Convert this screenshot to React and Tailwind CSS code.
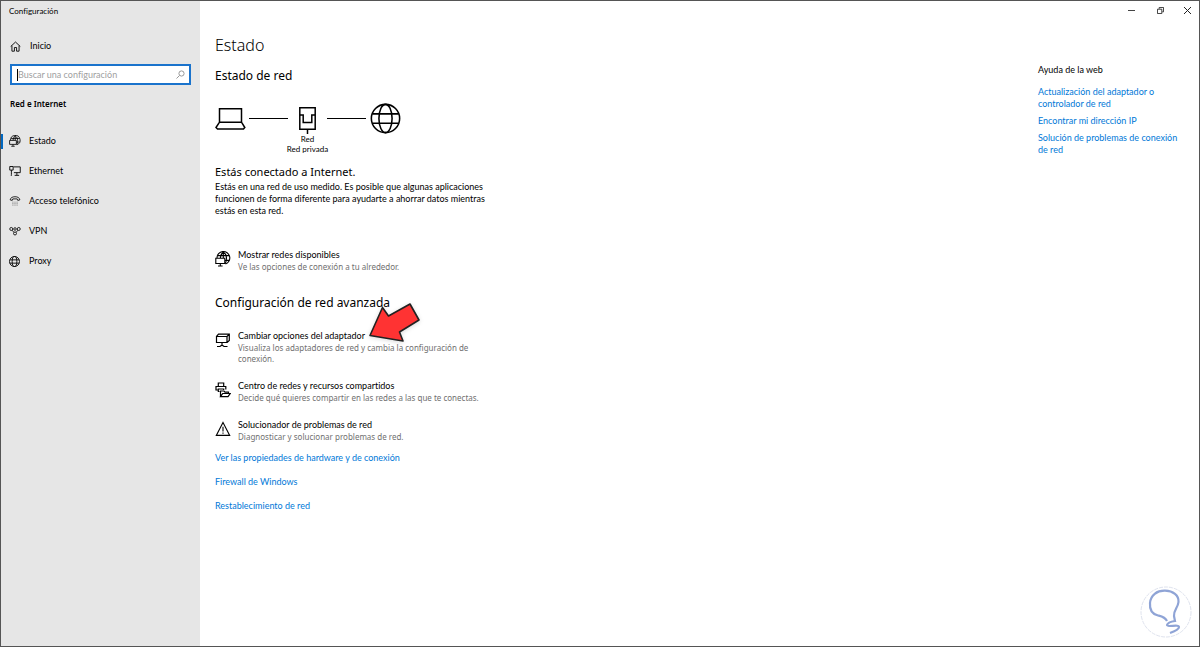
import React from 'react';

function Icon({ size = 12, box = 16, width = 1.1, children }) {
    return (
        <svg
            width={size}
            height={size}
            viewBox={`0 0 ${box} ${box}`}
            fill="none"
            stroke="currentColor"
            strokeWidth={width}
            className="block shrink-0"
            aria-hidden="true"
        >
            {children}
        </svg>
    );
}

const HomeIcon = () => (
    <Icon size={11} width={1.3}>
        <path d="M1 8 8 1.500 15 8M2.800 6.800v8h3.600V9.500h3.200v5.300h3.600v-8" />
    </Icon>
);

// Globe with a small monitor in front of its lower left part
const NetworkIcon = ({ size }) => (
    <Icon size={size}>
        <path d="M2 7A6.400 6.400 0 1 1 10.500 13" />
        <path d="M2.800 4.600h11.200M10 9.400h4.300M8.300 1C6.600 2.500 5.600 4.500 5.400 7M8.300 1c2.300 1.700 3.200 3.800 3.200 6.300s-.4 4-1.300 5.500M8.300 1v6" />
        <path d="M.8 7.200h9v5.300h-9zM5.300 12.500v2.300M3 15h4.600" />
    </Icon>
);

const EthernetIcon = () => (
    <Icon width={1.2}>
        <path d="M6 2.500h9v7.700H6.500M10.500 10.200v3.300M7.500 13.800h6M1 2h4.500v4.800H1zM3.200 6.800v3.700c0 1.800 0 3.300-.2 4" />
    </Icon>
);

const PhoneIcon = () => (
    <Icon>
        <path d="M1.500 6.500C2 3.500 4.700 2.300 8 2.300s6 1.200 6.500 4.200l-2.800.7-.8-2H5.100l-.8 2z" />
        <path d="M4.500 9.500h7M4.500 11.500h7M4.500 13.500h7" strokeDasharray="1.400 1.400" opacity=".5" />
    </Icon>
);

const VpnIcon = () => (
    <Icon>
        <circle cx="3" cy="5.300" r="2" />
        <circle cx="8" cy="5.300" r="1.700" />
        <circle cx="13" cy="5.300" r="2" />
        <circle cx="8" cy="11.300" r="2" />
        <path d="M4.300 7 6.500 9.800M11.700 7 9.500 9.800" />
    </Icon>
);

const GlobeIcon = ({ size = 11, width = 1.3 }) => (
    <Icon size={size} width={width}>
        <circle cx="8" cy="8" r="7.300" />
        <ellipse cx="8" cy="8" rx="3.400" ry="7.300" />
        <path d="M1.300 5.600h13.400M1.300 10.400h13.400" />
    </Icon>
);

const AdapterIcon = () => (
    <Icon size={16} width={1.2}>
        <path d="M1.500 4.500h10.500v6H1.500zM1.500 4.500l2-2.300h10.800v6.300L12 10.500M12 4.500l2.300-2.300M7 10.500v2.500M2 14.500h3L7 13l2 1.500h3.500" />
    </Icon>
);

const SharingIcon = () => (
    <Icon size={16} width={1.2}>
        <path d="M3.300 4.500V1h5.400v3.500M4.500 9.500H3.300V7h5.400v1M3.300 8H1V4.500h9.800v3" />
        <path d="M5.500 14.500V9H9l1 1.200h3.500v1.500M5.500 14.700l2.200-3.200h7.500L13 14.700z" />
    </Icon>
);

const WarningIcon = () => (
    <Icon size={16} width={1.1}>
        <path d="M8 1.500 14.700 14.400H1.300zM8 5.800v4.700M8 11.500v1.300" />
    </Icon>
);

const navItems = [
    { label: 'Estado', icon: NetworkIcon, active: true },
    { label: 'Ethernet', icon: EthernetIcon },
    { label: 'Acceso telefónico', icon: PhoneIcon },
    { label: 'VPN', icon: VpnIcon },
    { label: 'Proxy', icon: GlobeIcon },
];

const advancedOptions = [
    {
        title: 'Cambiar opciones del adaptador',
        text: 'Visualiza los adaptadores de red y cambia la configuración de conexión.',
        icon: AdapterIcon,
        pointed: true,
    },
    {
        title: 'Centro de redes y recursos compartidos',
        text: 'Decide qué quieres compartir en las redes a las que te conectas.',
        icon: SharingIcon,
    },
    {
        title: 'Solucionador de problemas de red',
        text: 'Diagnosticar y solucionar problemas de red.',
        icon: WarningIcon,
    },
];

const moreLinks = ['Ver las propiedades de hardware y de conexión', 'Firewall de Windows', 'Restablecimiento de red'];

const helpLinks = [
    'Actualización del adaptador o controlador de red',
    'Encontrar mi dirección IP',
    'Solución de problemas de conexión de red',
];

function Sidebar() {
    return (
        <aside className="w-[199px] shrink-0 bg-[#e6e6e6]">
            <div className="flex h-[19px] items-center pl-2 text-[8px]">Configuración</div>
            <a href="#inicio" className="mt-[15px] flex h-[22px] items-center gap-[9px] pl-[9px]">
                <HomeIcon />
                Inicio
            </a>
            <div className="mt-[7px] mr-[9px] ml-[9px] flex h-[21px] items-center border-2 border-[#1a73cc] bg-white pr-1 pl-[5px]">
                <span className="h-[12px] w-px shrink-0 bg-black" />
                <input
                    type="text"
                    aria-label="Buscar una configuración"
                    placeholder="Buscar una configuración"
                    className="min-w-0 flex-1 bg-transparent outline-none placeholder:text-[#a0a0a0]"
                />
                <svg width="9" height="9" viewBox="0 0 9 9" fill="none" stroke="#999" className="shrink-0" aria-hidden="true">
                    <circle cx="5.500" cy="3.500" r="2.600" />
                    <path d="M3.500 5.500.5 8.500" />
                </svg>
            </div>
            <h2 className="mt-[9px] flex h-5 items-center pl-[9px] font-['Noto_Sans',sans-serif] text-[8px] font-semibold">Red e Internet</h2>
            <nav className="mt-3">
                {navItems.map(({ label, icon: NavIcon, active }) => (
                    <a key={label} href={`#${label}`} className="flex h-[30px] items-center">
                        <span className={active ? 'h-[15px] w-[2px] bg-[#0067c0]' : 'h-[15px] w-[2px]'} />
                        <span className="ml-[6px] w-5">
                            <NavIcon />
                        </span>
                        {label}
                    </a>
                ))}
            </nav>
        </aside>
    );
}

function WindowControls() {
    return (
        <div className="flex h-[19px] justify-end">
            <button type="button" aria-label="Minimizar" className="flex w-[29px] items-center justify-center">
                <svg width="7" height="7" viewBox="0 0 7 7" stroke="#444">
                    <path d="M0 3.500h7" />
                </svg>
            </button>
            <button type="button" aria-label="Restaurar" className="flex w-[29px] items-center justify-center">
                <svg width="7" height="7" viewBox="0 0 8 8" fill="none" stroke="#222">
                    <path d="M.5 2.500h5v5h-5zM2.500 2V.5h5v5H6" />
                </svg>
            </button>
            <button type="button" aria-label="Cerrar" className="flex w-6 items-center justify-center">
                <svg width="7" height="7" viewBox="0 0 7 7" stroke="#222">
                    <path d="m0 0 7 7M7 0 0 7" />
                </svg>
            </button>
        </div>
    );
}

function NetworkDiagram() {
    return (
        <div className="mt-[17px] flex items-start">
            <div className="flex h-[31px] w-[34px] items-center">
                <svg width="31" height="24" viewBox="0 0 31 24" fill="none" stroke="black" strokeWidth="1.500">
                    <path d="M4.500 15.200V1.800h22v13.400M4.500 15.200h22l3.300 5.300-1.300 1.500h-26L1 20.500z" />
                </svg>
            </div>
            <div className="flex h-[31px] w-[39px] items-center">
                <div className="h-px w-full bg-black" />
            </div>
            <div className="flex w-[39px] flex-col items-center text-[8px] leading-[10px] whitespace-nowrap">
                <svg width="17" height="31" viewBox="0 0 17 31" fill="none" stroke="black" strokeWidth="1.500" className="block">
                    <path d="M.8 4.800h15.400v21.400H.8zM.8 12h3.400v7.500h8.600V12h3.400M8.500 26.200V31" />
                </svg>
                <span>Red</span>
                <span>Red privada</span>
            </div>
            <div className="flex h-[31px] w-[39px] items-center">
                <div className="h-px w-full bg-black" />
            </div>
            <div className="pl-1">
                <GlobeIcon size={31} width={0.8} />
            </div>
        </div>
    );
}

function PointerArrow() {
    return (
        <svg
            width="54"
            height="44"
            viewBox="0 0 54 44"
            className="absolute -top-[28px] left-[153px] drop-shadow-sm"
            aria-hidden="true"
        >
            <path
                d="M2 33.500 14.500 5.500l6 8.500L42 2l9 16-19.500 12 3.500 9z"
                fill="#ff3333"
                stroke="#222"
                strokeWidth="1.600"
                strokeLinejoin="round"
            />
        </svg>
    );
}

function Option({ title, text, icon: OptionIcon, pointed }) {
    return (
        <a href="#opcion" className="relative flex items-start gap-[7px]">
            <span className="pt-[2px]">
                <OptionIcon size={16} />
            </span>
            <span className="flex w-[250px] flex-col">
                <span className="leading-3">{title}</span>
                <span className="font-['Noto_Sans',sans-serif] text-[8px] leading-[11px] text-[#707070]">{text}</span>
            </span>
            {pointed && <PointerArrow />}
        </a>
    );
}

function Watermark() {
    return (
        <svg width="52" height="52" viewBox="0 0 52 52" fill="none" className="absolute right-[7px] bottom-2" aria-hidden="true">
            <circle cx="26" cy="26" r="25" stroke="#dfe3ee" strokeDasharray="4 1" />
            <path
                d="M27 35c-2-4-5-4.500-9-5.500C12 28 9.500 23 10 17c.6-8 7-12.500 15-12.300C33 5 39 9 38.500 16c-.5 5.500-5 8-4.500 14l1 5c-3.500.5-7.500 2-8 4 .5 2.500 12-1 12 2 0 2.500-5 4.500-9 6"
                stroke="#8fa4d6"
                strokeWidth="2.200"
            />
        </svg>
    );
}

export default function App() {
    return (
        <div className="relative flex min-h-screen border border-[#555] bg-white font-['Lato',sans-serif] text-[9px] text-black [font-variant-ligatures:none]">
            <Sidebar />
            <div className="min-w-0 flex-1">
                <WindowControls />
                <div className="flex justify-between">
                    <main className="pt-[13px] pl-[15px]">
                        <h1 className="font-['Noto_Sans',sans-serif] text-[16px] leading-6 font-light">Estado</h1>
                        <h2 className="mt-[9px] font-['Noto_Sans',sans-serif] text-[12px] leading-5">Estado de red</h2>
                        <NetworkDiagram />
                        <h3 className="mt-2 font-['Noto_Sans',sans-serif] text-[11px] leading-[19px]">Estás conectado a Internet.</h3>
                        <p className="w-[275px] leading-3">
                            Estás en una red de uso medido. Es posible que algunas aplicaciones funcionen de forma
                            diferente para ayudarte a ahorrar datos mientras estás en esta red.
                        </p>
                        <div className="mt-8">
                            <Option
                                title="Mostrar redes disponibles"
                                text="Ve las opciones de conexión a tu alrededor."
                                icon={NetworkIcon}
                            />
                        </div>
                        <h2 className="mt-[21px] font-['Noto_Sans',sans-serif] text-[12px] leading-5">
                            Configuración de red avanzada
                        </h2>
                        <div className="mt-[17px] flex flex-col gap-4">
                            {advancedOptions.map((option) => (
                                <Option key={option.title} {...option} />
                            ))}
                        </div>
                        <ul className="mt-[10px] flex flex-col gap-3 leading-3 text-[#0078d7]">
                            {moreLinks.map((label) => (
                                <li key={label}>
                                    <a href="#enlace">{label}</a>
                                </li>
                            ))}
                        </ul>
                    </main>
                    <section className="w-[161px] shrink-0 pt-11 leading-3">
                        <h2>Ayuda de la web</h2>
                        <ul className="mt-[10px] flex w-[144px] flex-col gap-[5px] text-[#0078d7]">
                            {helpLinks.map((label) => (
                                <li key={label}>
                                    <a href="#ayuda">{label}</a>
                                </li>
                            ))}
                        </ul>
                    </section>
                </div>
            </div>
            <Watermark />
        </div>
    );
}
